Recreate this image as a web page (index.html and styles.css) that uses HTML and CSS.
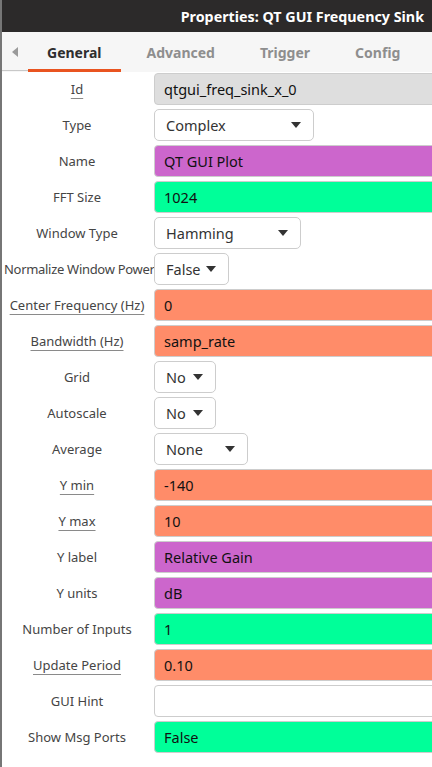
FILE: index.html
```html
<!DOCTYPE html>
<html lang="en">
<head>
<meta charset="utf-8">
<title>Properties: QT GUI Frequency Sink</title>
<link rel="stylesheet" href="styles.css">
</head>
<body>
<div class="window">
  <header class="titlebar"><span class="title">Properties: QT GUI Frequency Sink</span></header>
  <nav class="tabs">
    <span class="tab-arrow"><svg width="6" height="10" viewBox="0 0 6 10"><path d="M6 0 L0 5 L6 10 Z" fill="#9a9a9a"/></svg></span>
    <span class="tab active">General</span>
    <span class="tab">Advanced</span>
    <span class="tab">Trigger</span>
    <span class="tab">Config</span>
  </nav>
  <main class="props">
    <div class="lbl u"><span>Id</span></div>
    <div class="field f-id">qtgui_freq_sink_x_0</div>

    <div class="lbl"><span>Type</span></div>
    <div class="combo w-type"><span>Complex</span><svg class="caret" width="10" height="6" viewBox="0 0 10 6"><path d="M0 0 H10 L5 6 Z"/></svg></div>

    <div class="lbl"><span>Name</span></div>
    <div class="field f-str">QT GUI Plot</div>

    <div class="lbl"><span>FFT Size</span></div>
    <div class="field f-int">1024</div>

    <div class="lbl"><span>Window Type</span></div>
    <div class="combo w-window"><span>Hamming</span><svg class="caret" width="10" height="6" viewBox="0 0 10 6"><path d="M0 0 H10 L5 6 Z"/></svg></div>

    <div class="lbl tight"><span>Normalize Window Power</span></div>
    <div class="combo w-false"><span>False</span><svg class="caret" width="10" height="6" viewBox="0 0 10 6"><path d="M0 0 H10 L5 6 Z"/></svg></div>

    <div class="lbl u"><span>Center Frequency (Hz)</span></div>
    <div class="field f-real">0</div>

    <div class="lbl u"><span>Bandwidth (Hz)</span></div>
    <div class="field f-real">samp_rate</div>

    <div class="lbl"><span>Grid</span></div>
    <div class="combo w-no"><span>No</span><svg class="caret" width="10" height="6" viewBox="0 0 10 6"><path d="M0 0 H10 L5 6 Z"/></svg></div>

    <div class="lbl"><span>Autoscale</span></div>
    <div class="combo w-no"><span>No</span><svg class="caret" width="10" height="6" viewBox="0 0 10 6"><path d="M0 0 H10 L5 6 Z"/></svg></div>

    <div class="lbl"><span>Average</span></div>
    <div class="combo w-avg"><span>None</span><svg class="caret" width="10" height="6" viewBox="0 0 10 6"><path d="M0 0 H10 L5 6 Z"/></svg></div>

    <div class="lbl u"><span>Y min</span></div>
    <div class="field f-real">-140</div>

    <div class="lbl u"><span>Y max</span></div>
    <div class="field f-real">10</div>

    <div class="lbl"><span>Y label</span></div>
    <div class="field f-str">Relative Gain</div>

    <div class="lbl"><span>Y units</span></div>
    <div class="field f-str">dB</div>

    <div class="lbl"><span>Number of Inputs</span></div>
    <div class="field f-int">1</div>

    <div class="lbl u"><span>Update Period</span></div>
    <div class="field f-real">0.10</div>

    <div class="lbl"><span>GUI Hint</span></div>
    <div class="field f-empty"></div>

    <div class="lbl"><span>Show Msg Ports</span></div>
    <div class="field f-int">False</div>
  </main>
</div>
</body>
</html>
```

FILE: styles.css
```css
html, body {
  margin: 0;
  padding: 0;
}

body {
  background: #ffffff;
  font-family: "Noto Sans", "DejaVu Sans", sans-serif;
}

.window {
  width: 432px;
  height: 767px;
  box-sizing: border-box;
  border-left: 2px solid #767676;
  overflow: hidden;
  background: #ffffff;
}

.titlebar {
  height: 32px;
  background: #2c2a2a;
  display: flex;
  align-items: center;
  justify-content: flex-end;
  padding-right: 8px;
}

.title {
  color: #ffffff;
  font-weight: bold;
  font-size: 14.3px;
}

.tabs {
  height: 40px;
  background: #f6f6f6;
  display: flex;
  align-items: stretch;
  gap: 7px;
}

.tab-arrow {
  width: 26px;
  flex: none;
  display: flex;
  align-items: center;
  justify-content: center;
  box-sizing: border-box;
  border-bottom: 1px solid #c8c8c8;
  padding-top: 1px;
  margin-bottom: 1px;
}

.tab-arrow + .tab {
  margin-left: -7px;
}

.tab {
  flex: none;
  display: flex;
  align-items: center;
  padding: 3px 19px 0;
  box-sizing: border-box;
  border-bottom: 3px solid transparent;
  font-weight: bold;
  font-size: 14px;
  color: #8e8e8e;
}

.tab.active {
  color: #2e2e2e;
  border-bottom-color: #e95420;
}

.props {
  display: grid;
  grid-template-columns: 150px 300px;
  grid-auto-rows: 32px;
  column-gap: 2px;
  row-gap: 4px;
  padding-top: 1px;
}

.lbl {
  height: 32px;
  display: flex;
  align-items: center;
  justify-content: center;
  white-space: nowrap;
  font-size: 13px;
  color: #454545;
  position: relative;
  z-index: 0;
}

.lbl.tight {
  letter-spacing: -0.3px;
  justify-content: flex-start;
  padding-left: 2px;
}

.lbl.u span {
  text-decoration: underline;
  text-decoration-color: #8a8a8a;
  text-underline-offset: 4px;
}

.field {
  height: 32px;
  box-sizing: border-box;
  border: 1px solid #cdcdcd;
  border-radius: 4px;
  padding: 0 9px;
  display: flex;
  align-items: center;
  font-size: 14.5px;
  color: #111111;
  position: relative;
  z-index: 1;
}

.f-id { background: #dedede; }
.f-str { background: #cc66cc; }
.f-int { background: #00ff99; }
.f-real { background: #ff8c69; }
.f-empty { background: #ffffff; }

.combo {
  justify-self: start;
  height: 32px;
  box-sizing: border-box;
  border: 1px solid #cdcdcd;
  border-radius: 5px;
  background: #ffffff;
  display: flex;
  align-items: center;
  justify-content: space-between;
  padding: 0 12px 0 11px;
  font-size: 14.5px;
  color: #333333;
  position: relative;
  z-index: 1;
}

.caret {
  fill: #333333;
}

.w-type { width: 160px; }
.w-window { width: 147px; }
.w-false { width: 75px; }
.w-no { width: 62px; }
.w-avg { width: 94px; }
```
